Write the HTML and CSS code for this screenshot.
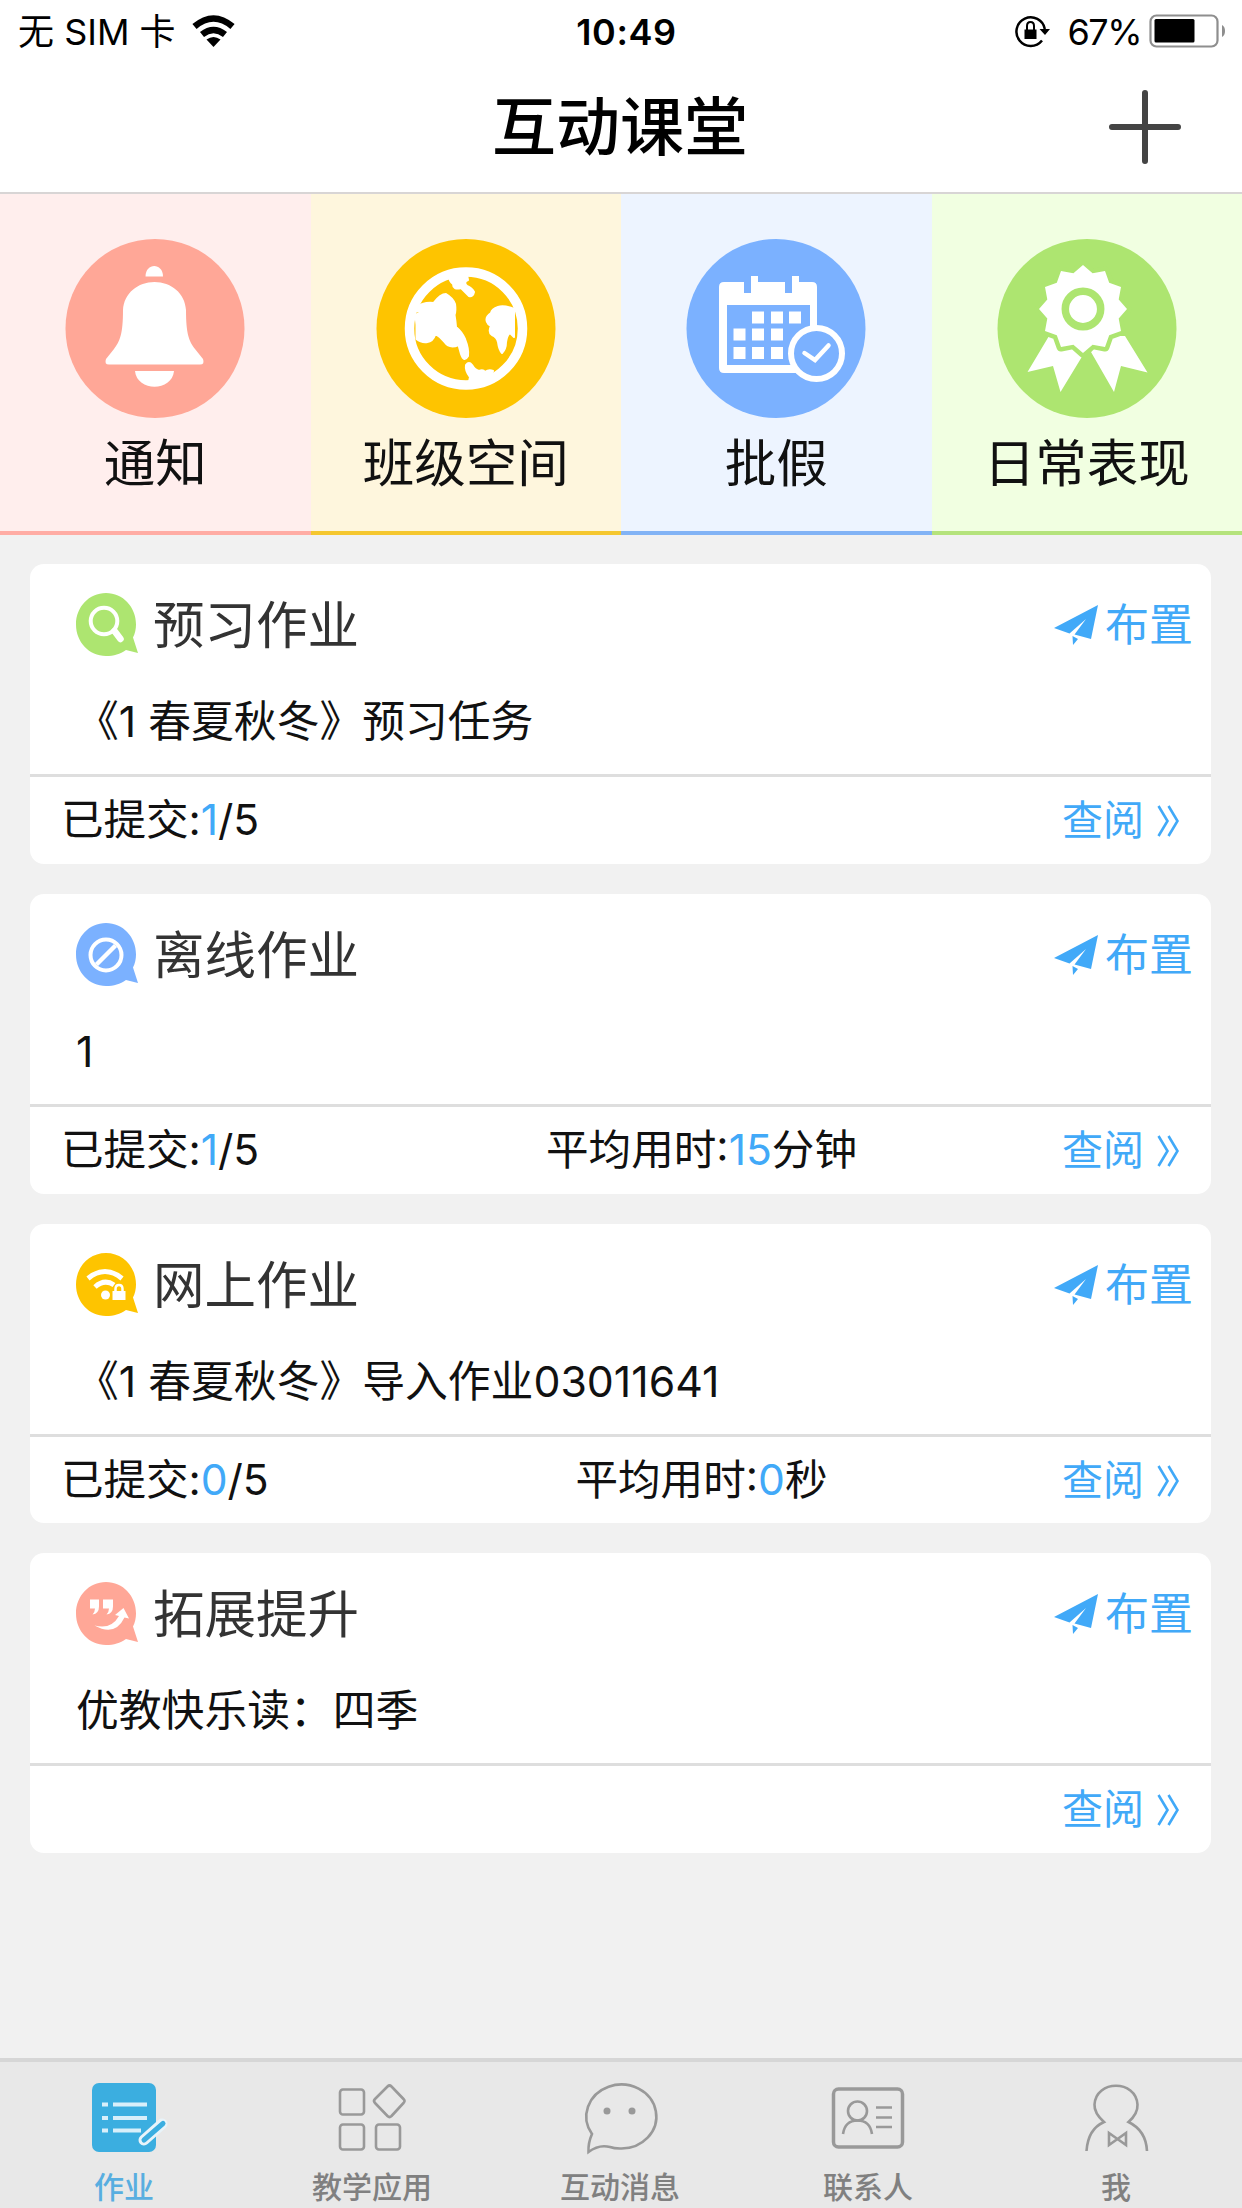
FILE: index.html
```html
<!DOCTYPE html>
<html lang="zh-CN">
<head>
    <meta charset="UTF-8">
    <meta name="viewport" content="width=device-width, initial-scale=1.0">
    <title>互动课堂</title>
    <link rel="stylesheet" href="styles.css">
</head>
<body>
    <!-- shared icons -->
    <svg class="sprite" width="0" height="0">
        <symbol id="plane" viewBox="0 0 45 40">
            <path d="M44 0L0 23l15.500 5.500L32 14 20.500 29.500 37 34zM18.500 31l5.500 3-5 6z"/>
        </symbol>
        <symbol id="more" viewBox="0 0 22 32">
            <path d="M1.500 1l9 15-9 15M11.500 1l9 15-9 15"/>
        </symbol>
        <symbol id="bubble" viewBox="0 0 62 64">
            <path d="M30 0C47 0 60 14 60 31.500c0 4.500-1 9-3 13L62 60l-12-3C44 61 38 63 30 63 13 63 0 49 0 31.500S13 0 30 0z"/>
        </symbol>
    </svg>

    <header class="header">
        <div class="status-bar">
            <div class="status-left">
                <span>无 SIM 卡</span>
                <svg width="43" height="31" viewBox="0 0 43 31">
                    <path d="M2.500 10.500Q21.500-5.500 40.500 10.500M10 18.500q11.500-9 23 0" fill="none" stroke="#000" stroke-width="6.500"/>
                    <path d="M21.500 31l-7-7.500q7-5 14 0z"/>
                </svg>
            </div>
            <div class="status-time">10:49</div>
            <div class="status-right">
                <svg width="35" height="32" viewBox="0 0 35 32">
                    <path d="M27 25.500A14.300 14.300 0 1 1 29.800 14" fill="none" stroke="#000" stroke-width="2.500"/>
                    <path d="M24.500 14H35l-5 6zM9.500 14.500h12V24h-12z"/>
                    <path d="M12 15v-4q0-4 3.500-4t3.500 4v4" fill="none" stroke="#000" stroke-width="2"/>
                </svg>
                <span class="battery-text">67%</span>
                <svg width="77" height="34" viewBox="0 0 77 34">
                    <rect x="1.500" y="1.500" width="67" height="31" rx="6" fill="none" stroke="#8e8e8e" stroke-width="2.200"/>
                    <rect x="5.500" y="5" width="40" height="23.500" rx="1.500"/>
                    <path d="M73 11q3 1.500 3 6t-3 6z" fill="#8e8e8e"/>
                </svg>
            </div>
        </div>
        <div class="nav-bar">
            <h1>互动课堂</h1>
            <svg class="add" width="72" height="74" viewBox="0 0 72 74">
                <path d="M36 3v68M3 37h66"/>
            </svg>
        </div>
    </header>

    <nav class="tiles">
        <a class="tile tile-red">
            <svg width="180" height="180" viewBox="0 0 180 180">
                <circle cx="90" cy="89.500" r="89.500" fill="#ffa797"/>
                <g fill="#fff">
                    <path d="M80.500 37.500c0-14 17.500-14 17.500 0z"/>
                    <path d="M89.500 43C106 43 120 54 121 71c0 24 3 31 9 39l8 10q2 5.500-3 5.500H44q-5 0-3-5.500l8-10c6-8 9-15 9-39 1-17 15-28 31.500-28z"/>
                    <path d="M70 132h39c-2 21-37 21-39 0z"/>
                </g>
            </svg>
            <span>通知</span>
        </a>
        <a class="tile tile-yellow">
            <svg width="180" height="180" viewBox="0 0 180 180">
                <circle cx="90" cy="89.500" r="89.500" fill="#fec400"/>
                <circle cx="90" cy="89.500" r="56.500" fill="none" stroke="#fff" stroke-width="9.500"/>
                <g fill="#fff" stroke="#fff" stroke-width="2" stroke-linejoin="round">
                    <path d="M70 55q7 4 9 10 1 7-.500 11 1 6 1.500 12 6 5 9 12 4 10 3 17-4 7-7-2l-2.500-9q-9 4-14-3-4-5-9-8-3 8-8 8-6 1-11-3v-14l-1-10 5-3-4-1q3-7 6-7 6-2 11-1 7-9 12.500-9z"/>
                    <path d="M73 36h18l1 5q-5 2-1 6 5 2 7 6-1 5-5 4-5-5-8-8-8 2-8-4-4-3-4-9z"/>
                    <path d="M138 70q-10-4-16-2-6 2-7 6-6 4-4 9 1 3 4 4-3 6 1 9 5 2 6 7 1 8 4 11 4-4 4-11 1-7 4-9l4 4z"/>
                    <path d="M93 143l1-5q-5-6-4-12 3-4 6 0 3 5 7 6 4-2 6 1 4-3 8-1l-5 11z"/>
                </g>
            </svg>
            <span>班级空间</span>
        </a>
        <a class="tile tile-blue">
            <svg width="180" height="180" viewBox="0 0 180 180">
                <circle cx="90" cy="89.500" r="89.500" fill="#7bb1ff"/>
                <path d="M38 43h20v11h7V37h7v6h27v11h7V37h7v6h13q5 0 5 5v81q0 5-5 5H38q-5 0-5-5V48q0-5 5-5zm3 23v60h83V66z" fill="#fff"/>
                <path d="M66 72.500h12v12H66zM85 72.500h12v12H85zM103 72.500h12v12h-12zM47.500 89.500h12v12h-12zM66 89.500h12v12H66zM85 89.500h12v12H85zM47.500 108h12v12h-12zM66 108h12v12H66zM85 108h12v12H85z" fill="#fff"/>
                <circle cx="130.500" cy="114.500" r="25.500" fill="#7bb1ff" stroke="#fff" stroke-width="6"/>
                <path d="M118.500 114l10.500 7 13.500-14.500" fill="none" stroke="#fff" stroke-width="4.500" stroke-linecap="round"/>
            </svg>
            <span>批假</span>
        </a>
        <a class="tile tile-green">
            <svg width="180" height="180" viewBox="0 0 180 180">
                <circle cx="90" cy="89.500" r="89.500" fill="#ade570"/>
                <path d="M52 97l-21.500 36 25.500-6 7.500 26L86 116V97zM128 97l22.500 36.500L124 127l-7 26-23-40V97z" fill="#fff"/>
                <path d="M80 110l9 6 6-4-9-4z" fill="#ade570"/>
                <polygon points="86,26 95.600,34.300 108,32 112.200,43.800 124,48 121.700,60.400 130,70 121.700,79.600 124,92 112.200,96.200 108,108 95.600,105.700 86,114 76.400,105.700 64,108 59.800,96.200 48,92 50.300,79.600 42,70 50.300,60.400 48,48 59.800,43.800 64,32 76.400,34.300" fill="#fff" stroke="#ade570" stroke-width="9" stroke-linejoin="round" paint-order="stroke"/>
                <circle cx="86" cy="70" r="17.700" fill="#fff" stroke="#ade570" stroke-width="7.500"/>
            </svg>
            <span>日常表现</span>
        </a>
    </nav>

    <main class="list">
        <section class="card">
            <div class="card-body">
                <div class="card-head">
                    <svg class="type-icon" width="62" height="64" viewBox="0 0 62 64">
                        <use href="#bubble" fill="#ade570"/>
                        <circle cx="28" cy="28" r="13.300" fill="none" stroke="#fff" stroke-width="4"/>
                        <path d="M38.500 38l6 8" stroke="#fff" stroke-width="6.500" stroke-linecap="round"/>
                    </svg>
                    <h2>预习作业</h2>
                    <a class="assign"><svg width="45" height="40"><use href="#plane"/></svg>布置</a>
                </div>
                <p class="task">《1 春夏秋冬》预习任务</p>
            </div>
            <div class="card-foot">
                <span class="submitted">已提交:<b>1</b>/5</span>
                <span class="duration"></span>
                <a class="review">查阅<svg width="22" height="32"><use href="#more"/></svg></a>
            </div>
        </section>

        <section class="card">
            <div class="card-body">
                <div class="card-head">
                    <svg class="type-icon" width="62" height="64" viewBox="0 0 62 64">
                        <use href="#bubble" fill="#7bb1ff"/>
                        <circle cx="30" cy="32" r="15.500" fill="none" stroke="#fff" stroke-width="4"/>
                        <path d="M20.500 41.500l19-19" stroke="#fff" stroke-width="4.500"/>
                    </svg>
                    <h2>离线作业</h2>
                    <a class="assign"><svg width="45" height="40"><use href="#plane"/></svg>布置</a>
                </div>
                <p class="task">1</p>
            </div>
            <div class="card-foot">
                <span class="submitted">已提交:<b>1</b>/5</span>
                <span class="duration">平均用时:<b>15</b>分钟</span>
                <a class="review">查阅<svg width="22" height="32"><use href="#more"/></svg></a>
            </div>
        </section>

        <section class="card">
            <div class="card-body">
                <div class="card-head">
                    <svg class="type-icon" width="62" height="64" viewBox="0 0 62 64">
                        <use href="#bubble" fill="#fec400"/>
                        <path d="M12 25.500q17-14 34 0M19 34q9.500-8.500 19-2" fill="none" stroke="#fff" stroke-width="5"/>
                        <circle cx="29.500" cy="42" r="4.500" fill="#fff"/>
                        <path d="M36.500 38h13v9h-13z" fill="#fff"/>
                        <path d="M39.500 39v-3q0-4 3.500-4t3.500 4v3" fill="none" stroke="#fff" stroke-width="2.500"/>
                    </svg>
                    <h2>网上作业</h2>
                    <a class="assign"><svg width="45" height="40"><use href="#plane"/></svg>布置</a>
                </div>
                <p class="task">《1 春夏秋冬》导入作业03011641</p>
            </div>
            <div class="card-foot">
                <span class="submitted">已提交:<b>0</b>/5</span>
                <span class="duration">平均用时:<b>0</b>秒</span>
                <a class="review">查阅<svg width="22" height="32"><use href="#more"/></svg></a>
            </div>
        </section>

        <section class="card">
            <div class="card-body">
                <div class="card-head">
                    <svg class="type-icon" width="62" height="64" viewBox="0 0 62 64">
                        <use href="#bubble" fill="#ffa797"/>
                        <path d="M14 17.500h9v7q0 7-6.500 8 2.500-3 2.500-6h-5zM27 17.500h10v7q0 7-6.500 8 2.500-3 2.500-6h-6z" fill="#fff"/>
                        <path d="M18.500 43.500Q35 48 43 34l-4-1 8.500-7L53 36.500l-4.500-1Q39 55 18.500 43.500z" fill="#fff"/>
                    </svg>
                    <h2>拓展提升</h2>
                    <a class="assign"><svg width="45" height="40"><use href="#plane"/></svg>布置</a>
                </div>
                <p class="task">优教快乐读：四季</p>
            </div>
            <div class="card-foot">
                <span class="submitted"></span>
                <span class="duration"></span>
                <a class="review">查阅<svg width="22" height="32"><use href="#more"/></svg></a>
            </div>
        </section>
    </main>

    <footer class="tab-bar">
        <a class="tab active">
            <svg width="64" height="70" viewBox="0 0 64 70">
                <rect width="64" height="69" rx="7" fill="#3baee0"/>
                <path d="M10 21.500h6M21 21.500h34M10 35h6M21 35h34M10 47.500h6M21 47.500h28" stroke="#d8effa" stroke-width="4"/>
                <path d="M70 41L52 57" stroke="#e8f4fa" stroke-width="11" stroke-linecap="round"/>
                <path d="M71 40.500L52 57" stroke="#3baee0" stroke-width="5" stroke-linecap="round"/>
            </svg>
            <span>作业</span>
        </a>
        <a class="tab">
            <svg width="68" height="70" viewBox="0 0 68 70">
                <rect x="2" y="6.500" width="24" height="25" rx="3"/>
                <rect x="2" y="41.500" width="24" height="25" rx="3"/>
                <rect x="38" y="41.500" width="24" height="25" rx="3"/>
                <path d="M49.500 3.500q2-2 4 0L65.500 16q2 2 0 4L53.500 33q-2 2-4 0L37 20q-2-2 0-4z"/>
            </svg>
            <span>教学应用</span>
        </a>
        <a class="tab">
            <svg width="72" height="70" viewBox="0 0 72 70">
                <path d="M4.500 69Q4 60 8 51A35 32 0 1 1 36 65.500q-6 0-10-1.500-11-3-21.500 5z"/>
                <circle class="dot" cx="23" cy="28" r="3.500"/>
                <circle class="dot" cx="48" cy="28" r="3.500"/>
            </svg>
            <span>互动消息</span>
        </a>
        <a class="tab">
            <svg width="72" height="70" viewBox="0 0 72 70">
                <rect x="1.500" y="6" width="69" height="58" rx="5" stroke-width="3.500"/>
                <circle cx="25.500" cy="28" r="9.500"/>
                <path d="M11 51q2-13.500 14.500-13.500T40 51M44 24.500h16M44 34.500h16M44 44h16"/>
            </svg>
            <span>联系人</span>
        </a>
        <a class="tab">
            <svg width="63" height="70" viewBox="0 0 63 70">
                <path d="M1.500 68Q3 46 19 39 9 30 9.500 21.500C11-3.500 51-3.500 52.500 21.500 53 30 48 35 43.500 39 58 46 61.500 58 62 68M24 50l17 12V50L24 62z"/>
            </svg>
            <span>我</span>
        </a>
    </footer>
</body>
</html>
```
FILE: styles.css
```css
* {
    margin: 0;
    padding: 0;
    box-sizing: border-box;
}

body {
    display: flex;
    flex-direction: column;
    width: 1242px;
    height: 2208px;
    font-family: Inter, "Noto Sans CJK SC", sans-serif;
    background: #f1f1f1;
    color: #111;
    overflow: hidden;
}

svg {
    display: block;
    flex-shrink: 0;
    overflow: visible;
}

.sprite {
    position: absolute;
}

/* Header */
.header {
    height: 194px;
    background: #fff;
    border-bottom: 2px solid #d8d5d5;
    color: #000;
}

.status-bar {
    display: grid;
    grid-template-columns: 1fr auto 1fr;
    align-items: center;
    height: 64px;
    padding: 0 16px 0 18px;
    font-size: 36px;
    line-height: 64px;
}

.status-left,
.status-right {
    display: flex;
    align-items: center;
}

.status-left {
    gap: 16px;
}

.status-left svg,
.status-right svg {
    margin-bottom: 2px;
}

.status-right {
    justify-content: flex-end;
}

.status-time {
    padding-left: 9px;
    font-weight: 600;
    letter-spacing: 0.6px;
}

.battery-text {
    margin: 0 8px 0 17px;
    letter-spacing: -1.5px;
}

.nav-bar {
    display: grid;
    grid-template-columns: 1fr auto 1fr;
    align-items: center;
    height: 126px;
    padding: 0 61px 0 59px;
}

.nav-bar h1 {
    grid-column: 2;
    font-size: 64px;
    font-weight: 500;
    line-height: 126px;
}

.add {
    justify-self: end;
    margin-bottom: 1px;
    fill: none;
    stroke: #444;
    stroke-width: 6;
    stroke-linecap: round;
}

/* Category tiles */
.tiles {
    display: grid;
    grid-template-columns: repeat(4, 1fr);
    height: 341px;
}

.tile {
    display: flex;
    flex-direction: column;
    align-items: center;
    padding-top: 45px;
    border-bottom: 4px solid;
}

.tile span {
    margin-top: 7px;
    font-size: 51.500px;
    line-height: 74px;
    color: #111;
}

.tile-red {
    background: #ffeeed;
    border-color: #ffaca4;
}

.tile-yellow {
    background: #fef6dd;
    border-color: #f5c72f;
}

.tile-blue {
    background: #edf4ff;
    border-color: #82b3f5;
}

.tile-green {
    background: #f1ffe1;
    border-color: #b5e37c;
}

/* Homework cards */
.list {
    flex: 1;
    display: flex;
    flex-direction: column;
    gap: 30px;
    padding: 29.300px 31px 0 30px;
}

.card {
    height: 299.700px;
    background: #fff;
    border-radius: 14px;
}

.card-body {
    height: 213px;
    padding: 23px 18px 0 46px;
    border-bottom: 3px solid #dedede;
}

.card-head {
    display: flex;
    align-items: center;
    height: 76px;
}

.card-head h2 {
    flex: 1;
    margin-left: 15px;
    font-size: 51.500px;
    font-weight: 400;
    line-height: 76px;
    color: #333;
}

.assign {
    display: flex;
    align-items: center;
    gap: 6px;
    font-size: 44px;
    line-height: 76px;
    color: #41a9f8;
    fill: #41a9f8;
}

.task {
    margin-top: 27px;
    font-size: 42.800px;
    line-height: 64px;
}

.card-foot {
    display: flex;
    align-items: center;
    height: 86px;
    padding: 0 32px 0 31px;
    font-size: 42.600px;
    line-height: 86px;
}

.card-foot b {
    font-weight: 400;
    color: #41a9f8;
}

.submitted {
    width: 300px;
    letter-spacing: -0.1px;
}

.duration {
    flex: 1;
    padding-left: 33px;
    text-align: center;
}

.review {
    display: flex;
    align-items: center;
    justify-content: flex-end;
    width: 170px;
    gap: 13px;
    font-size: 41px;
    color: #41a9f8;
}

.review svg {
    margin-top: 2px;
    fill: none;
    stroke: #41a9f8;
    stroke-width: 2.600;
}

/* Bottom tabs */
.tab-bar {
    display: grid;
    grid-template-columns: repeat(5, 1fr);
    height: 150px;
    padding-right: 2px;
    background: #e8e8e8;
    border-top: 4px solid #d6d6d6;
}

.tab {
    display: flex;
    flex-direction: column;
    align-items: center;
    padding-top: 21px;
    color: #808080;
}

.tab svg {
    fill: none;
    stroke: #999;
    stroke-width: 2.600;
}

.tab .dot {
    fill: #999;
    stroke: none;
}

.tab span {
    margin-top: 12px;
    font-size: 30px;
    font-weight: 500;
    line-height: 44px;
}

.tab.active {
    color: #58aee0;
}

.tab.active svg {
    stroke: none;
}
```
